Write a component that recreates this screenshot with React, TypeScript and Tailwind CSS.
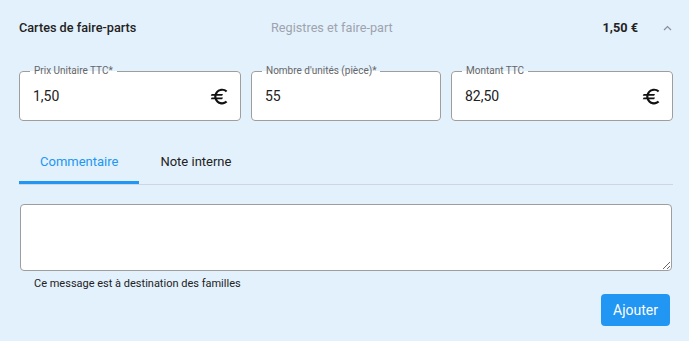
import React, { useState } from 'react';

const font = { fontFamily: 'Roboto, "Liberation Sans", sans-serif' };

type FieldProps = {
  label: string;
  value: string;
  euro?: boolean;
};

const EuroIcon = () => (
  <svg width="21" height="21" viewBox="0 0 24 24" fill="#111">
    <path d="M15 18.5c-2.51 0-4.68-1.42-5.76-3.5H15l1-2H8.58c-.05-.33-.08-.66-.08-1s.03-.67.08-1H15l1-2H9.24C10.32 6.92 12.5 5.5 15 5.5c1.61 0 3.09.59 4.23 1.57L21 5.3C19.41 3.87 17.3 3 15 3c-3.92 0-7.24 2.51-8.48 6H3l-1 2h4.06c-.04.33-.06.66-.06 1s.02.67.06 1H3l-1 2h4.52c1.24 3.49 4.56 6 8.48 6 2.31 0 4.41-.87 6-2.3l-1.78-1.77c-1.13.98-2.6 1.57-4.22 1.57z" />
  </svg>
);

const PriceField: React.FC<FieldProps> = ({ label, value, euro }) => (
  <fieldset className="m-0 h-[56px] rounded-[4px] border border-[#9e9e9e] bg-white p-0">
    <legend className="ml-[10px] px-[4px] text-[10px] leading-[12px] text-[#666]">{label}</legend>
    <div className="flex h-[43px] items-center pl-[13px] pr-[10px] pb-[4px]">
      <span className="flex-1 text-[14px] text-[#222]">{value}</span>
      {euro && <EuroIcon />}
    </div>
  </fieldset>
);

export default function App() {
  const [tab, setTab] = useState<'comment' | 'note'>('comment');

  return (
    <div className="min-h-[341px] w-full bg-[#e3f1fc] pl-[19px] pr-[16px]" style={font}>
      {/* header */}
      <div className="flex h-[55px] items-center text-[12.7px]">
        <span className="w-[252px] font-medium text-[#222]">Cartes de faire-parts</span>
        <span className="flex-1 text-[#9ea3ad]">Registres et faire-part</span>
        <span className="font-bold text-[#222]">1,50 €</span>
        <svg className="ml-[25px] mr-[1px]" width="9" height="6" viewBox="0 0 9 6" fill="none">
          <polyline points="1,5 4.5,1.5 8,5" stroke="#8a8f99" strokeWidth="1.2" />
        </svg>
      </div>

      {/* amount fields */}
      <div className="mt-[10px] grid grid-cols-[222px_190px_222px] gap-[10px]">
        <PriceField label="Prix Unitaire TTC*" value="1,50" euro />
        <PriceField label="Nombre d'unités (pièce)*" value="55" />
        <PriceField label="Montant TTC" value="82,50" euro />
      </div>

      {/* tabs */}
      <div className="mt-[18px] flex border-b border-[#cfd6e2]">
        <button
          onClick={() => setTab('comment')}
          className={`relative h-[45px] px-[21px] text-[13px] ${tab === 'comment' ? 'text-[#2196f3]' : 'text-[#222]'}`}
        >
          Commentaire
          {tab === 'comment' && <span className="absolute bottom-0 left-0 h-[3px] w-full bg-[#2196f3]" />}
        </button>
        <button
          onClick={() => setTab('note')}
          className={`relative h-[45px] px-[21px] text-[13px] ${tab === 'note' ? 'text-[#2196f3]' : 'text-[#222]'}`}
        >
          Note interne
          {tab === 'note' && <span className="absolute bottom-0 left-0 h-[3px] w-full bg-[#2196f3]" />}
        </button>
      </div>

      {/* comment */}
      <div className="mt-[19px] pl-[1px] pr-[1px]">
        <textarea className="block h-[67px] w-full resize-y rounded-[4px] border border-[#9e9e9e] bg-white p-2 text-[14px] outline-none" />
        <p className="mt-[6px] pl-[14px] text-[11px] leading-[14px] text-[#222]">
          Ce message est à destination des familles
        </p>
        <div className="mt-[3px] flex justify-end pr-[2px]">
          <button className="h-[32px] w-[69px] rounded-[4px] bg-[#2196f3] text-[14px] text-white">Ajouter</button>
        </div>
      </div>
    </div>
  );
}
